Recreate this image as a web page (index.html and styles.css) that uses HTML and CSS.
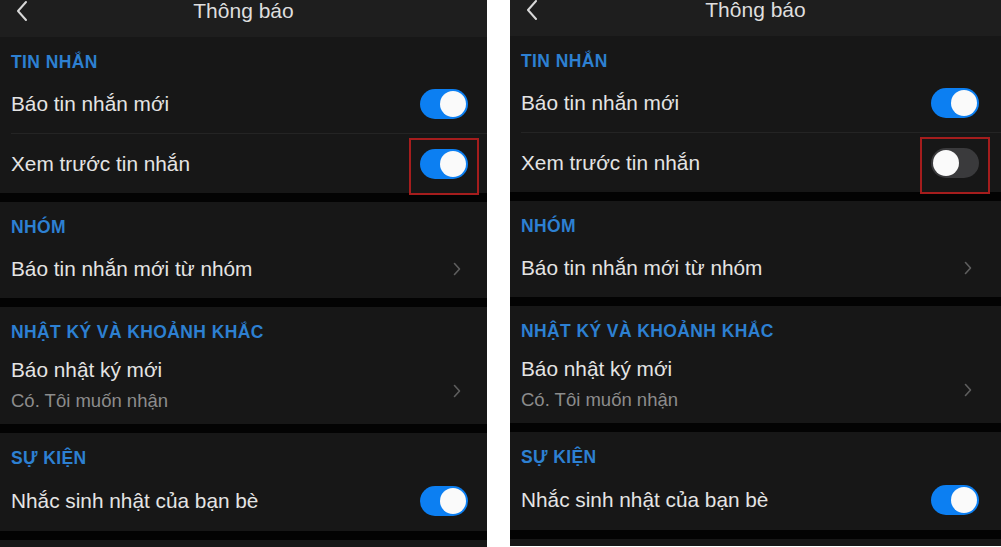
FILE: index.html
```html
<!DOCTYPE html>
<html>
<head>
  <meta charset="UTF-8">
  <title>Thông báo</title>
  <link rel="stylesheet" href="styles.css">
</head>
<body>

  <div class="panel">
    <div class="topbar">
      <svg class="back" width="14" height="22" viewBox="0 0 14 22"><polyline points="11,2 3,11 11,20" fill="none" stroke="#d8d8d8" stroke-width="2" stroke-linecap="round" stroke-linejoin="round"/></svg>
      <span class="title">Thông báo</span>
    </div>

    <div class="section">
      <div class="sec-head">TIN NHẮN</div>
      <div class="row line">
        <span class="label">Báo tin nhắn mới</span>
        <span class="toggle on"></span>
      </div>
      <div class="row">
        <span class="label">Xem trước tin nhắn</span>
        <span class="toggle on marked"></span>
      </div>
    </div>

    <div class="section">
      <div class="sec-head">NHÓM</div>
      <div class="row">
        <span class="label">Báo tin nhắn mới từ nhóm</span>
        <svg class="chev" width="8" height="14" viewBox="0 0 8 14"><polyline points="1.5,1.5 6.5,7 1.5,12.5" fill="none" stroke="#5e5e5e" stroke-width="1.6" stroke-linecap="round" stroke-linejoin="round"/></svg>
      </div>
    </div>

    <div class="section">
      <div class="sec-head">NHẬT KÝ VÀ KHOẢNH KHẮC</div>
      <div class="row tall">
        <div>
          <div class="label">Báo nhật ký mới</div>
          <div class="sub">Có. Tôi muốn nhận</div>
        </div>
        <svg class="chev" width="8" height="14" viewBox="0 0 8 14"><polyline points="1.5,1.5 6.5,7 1.5,12.5" fill="none" stroke="#5e5e5e" stroke-width="1.6" stroke-linecap="round" stroke-linejoin="round"/></svg>
      </div>
    </div>

    <div class="section">
      <div class="sec-head">SỰ KIỆN</div>
      <div class="row last">
        <span class="label">Nhắc sinh nhật của bạn bè</span>
        <span class="toggle on"></span>
      </div>
    </div>

    <div class="section"></div>
  </div>

  <div class="panel alt">
    <div class="topbar">
      <svg class="back" width="14" height="22" viewBox="0 0 14 22"><polyline points="11,2 3,11 11,20" fill="none" stroke="#d8d8d8" stroke-width="2" stroke-linecap="round" stroke-linejoin="round"/></svg>
      <span class="title">Thông báo</span>
    </div>

    <div class="section">
      <div class="sec-head">TIN NHẮN</div>
      <div class="row line">
        <span class="label">Báo tin nhắn mới</span>
        <span class="toggle on"></span>
      </div>
      <div class="row">
        <span class="label">Xem trước tin nhắn</span>
        <span class="toggle marked"></span>
      </div>
    </div>

    <div class="section">
      <div class="sec-head">NHÓM</div>
      <div class="row">
        <span class="label">Báo tin nhắn mới từ nhóm</span>
        <svg class="chev" width="8" height="14" viewBox="0 0 8 14"><polyline points="1.5,1.5 6.5,7 1.5,12.5" fill="none" stroke="#5e5e5e" stroke-width="1.6" stroke-linecap="round" stroke-linejoin="round"/></svg>
      </div>
    </div>

    <div class="section">
      <div class="sec-head">NHẬT KÝ VÀ KHOẢNH KHẮC</div>
      <div class="row tall">
        <div>
          <div class="label">Báo nhật ký mới</div>
          <div class="sub">Có. Tôi muốn nhận</div>
        </div>
        <svg class="chev" width="8" height="14" viewBox="0 0 8 14"><polyline points="1.5,1.5 6.5,7 1.5,12.5" fill="none" stroke="#5e5e5e" stroke-width="1.6" stroke-linecap="round" stroke-linejoin="round"/></svg>
      </div>
    </div>

    <div class="section">
      <div class="sec-head">SỰ KIỆN</div>
      <div class="row last">
        <span class="label">Nhắc sinh nhật của bạn bè</span>
        <span class="toggle on"></span>
      </div>
    </div>

    <div class="section"></div>
  </div>

</body>
</html>
```

FILE: styles.css
```css
body {
  margin: 0;
  height: 547px;
  overflow: hidden;
  background: #fff;
  display: flex;
  gap: 23px;
  font-family: "Liberation Sans", Arial, sans-serif;
}
.panel {
  width: 487px;
  height: 547px;
  background: #030303;
  display: flex;
  flex-direction: column;
  gap: 9px;
  overflow: hidden;
}
.panel.alt {
  flex: 1;
  margin-top: -1px;
}
.topbar {
  height: 37px;
  margin-bottom: -9px;
  background: #1e1e1e;
  position: relative;
  display: flex;
  justify-content: center;
}
.back {
  position: absolute;
  left: 15px;
  top: 0;
}
.title {
  color: #dedede;
  font-size: 21px;
  line-height: 22px;
  margin-top: 0;
}
.section {
  background: #171717;
  flex-shrink: 0;
}
.section:last-child {
  flex: 1;
}
.sec-head {
  color: #2d80d2;
  font-size: 17.5px;
  font-weight: bold;
  line-height: 18px;
  padding: 16px 11px 3px;
  letter-spacing: 0.4px;
}
.row {
  height: 59px;
  padding: 0 19px 0 11px;
  display: flex;
  align-items: center;
  justify-content: space-between;
}
.alt .row {
  padding-right: 22px;
}
.row.line {
  height: 59px;
  border-bottom: 1px solid #242424;
  margin-left: 11px;
  padding-left: 0;
}
.row.tall {
  height: 80px;
  align-items: flex-start;
  padding-top: 14px;
  box-sizing: border-box;
}
.row.tall .chev {
  margin-top: 26px;
}
.row.last {
  height: 61px;
}
.label {
  color: #e4e4e4;
  font-size: 20.8px;
  line-height: 24px;
}
.sub {
  color: #8c8c8c;
  font-size: 18.5px;
  line-height: 22px;
  margin-top: 8px;
}
.chev {
  margin-right: 7px;
}
.toggle {
  width: 48px;
  height: 30px;
  border-radius: 15px;
  background: #3a3a3c;
  position: relative;
  flex-shrink: 0;
}
.toggle::before {
  content: "";
  position: absolute;
  top: 2px;
  left: 2px;
  width: 26px;
  height: 26px;
  border-radius: 50%;
  background: #fafafa;
}
.toggle.on {
  background: #0c7ff2;
}
.toggle.on::before {
  left: 20px;
}
.toggle.marked::after {
  content: "";
  position: absolute;
  top: -11px;
  bottom: -16px;
  left: -11px;
  right: -11px;
  border: 2px solid #a51d1d;
}
```
